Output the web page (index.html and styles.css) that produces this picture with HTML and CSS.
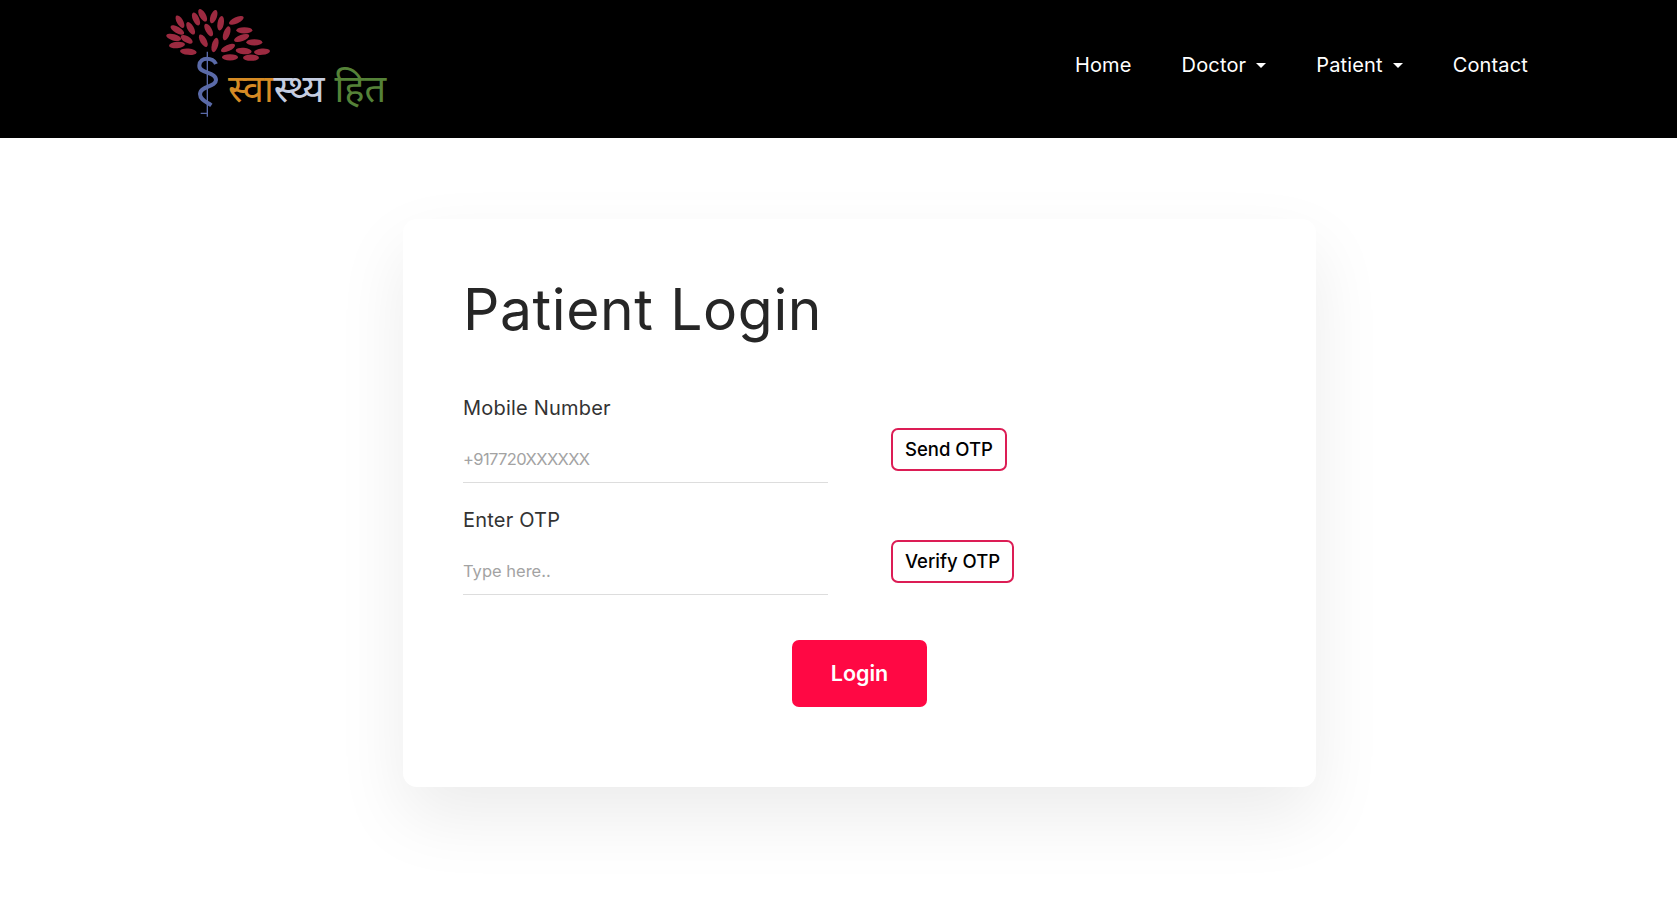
FILE: index.html
```html
<!DOCTYPE html>
<html lang="en">
<head>
    <meta charset="UTF-8">
    <meta name="viewport" content="width=device-width, initial-scale=1.0">
    <title>Patient Login</title>
    <link rel="stylesheet" href="styles.css">
</head>
<body>
    <header class="navbar">
        <a class="brand" href="#">
            <svg class="brand-logo" viewBox="0 0 780 390" width="260" height="130">
                <g fill="#9c2a40">
                    <ellipse cx="90" cy="65" rx="21" ry="9.5" transform="rotate(60 90 65)"/>
                    <ellipse cx="138" cy="57" rx="21" ry="9.5" transform="rotate(65 138 57)"/>
                    <ellipse cx="158" cy="46" rx="21" ry="9.5" transform="rotate(60 158 46)"/>
                    <ellipse cx="191" cy="50" rx="21" ry="9.5" transform="rotate(-70 191 50)"/>
                    <ellipse cx="259" cy="61" rx="24" ry="9.5" transform="rotate(-25 259 61)"/>
                    <ellipse cx="122" cy="85" rx="21" ry="9.5" transform="rotate(60 122 85)"/>
                    <ellipse cx="82" cy="90" rx="23" ry="9.5" transform="rotate(30 82 90)"/>
                    <ellipse cx="176" cy="90" rx="21" ry="9.5" transform="rotate(60 176 90)"/>
                    <ellipse cx="212" cy="70" rx="22" ry="9.5" transform="rotate(-80 212 70)"/>
                    <ellipse cx="283" cy="91" rx="24" ry="9.5"/>
                    <ellipse cx="230" cy="100" rx="22" ry="9.5" transform="rotate(-70 230 100)"/>
                    <ellipse cx="71" cy="112" rx="23" ry="9.5" transform="rotate(15 71 112)"/>
                    <ellipse cx="110" cy="118" rx="20" ry="9.5" transform="rotate(30 110 118)"/>
                    <ellipse cx="160" cy="122" rx="21" ry="9.5" transform="rotate(60 160 122)"/>
                    <ellipse cx="275" cy="114" rx="24" ry="9.5" transform="rotate(-20 275 114)"/>
                    <ellipse cx="313" cy="127" rx="24" ry="9.5"/>
                    <ellipse cx="81" cy="135" rx="24" ry="9.5" transform="rotate(-5 81 135)"/>
                    <ellipse cx="195" cy="135" rx="22" ry="9.5" transform="rotate(-75 195 135)"/>
                    <ellipse cx="234" cy="144" rx="23" ry="9.5" transform="rotate(-25 234 144)"/>
                    <ellipse cx="115" cy="155" rx="25" ry="9.5" transform="rotate(5 115 155)"/>
                    <ellipse cx="281" cy="153" rx="24" ry="9.5" transform="rotate(5 281 153)"/>
                    <ellipse cx="336" cy="155" rx="24" ry="9.5" transform="rotate(-5 336 155)"/>
                    <ellipse cx="240" cy="172" rx="24" ry="9.5"/>
                    <ellipse cx="303" cy="173" rx="24" ry="9.5"/>
                </g>
                <path d="M172 155V350M152 340H172" stroke="#5a6aa8" stroke-width="4" fill="none"/>
                <path d="M198 192C190 172 150 168 148 196C146 222 198 214 198 240C198 262 152 256 150 282C150 300 170 306 184 316" stroke="#5a6aa8" stroke-width="12" fill="none"/>
                <text class="brand-text" x="234" y="306"><tspan fill="#d68b24">स्वा</tspan><tspan fill="#c5cde0">स्थ्य</tspan> <tspan fill="#558238">हित</tspan></text>
            </svg>
        </a>
        <nav class="nav-links">
            <a href="#">Home</a>
            <a href="#" class="dropdown">Doctor</a>
            <a href="#" class="dropdown">Patient</a>
            <a href="#">Contact</a>
        </nav>
    </header>

    <main class="login-card">
        <h1>Patient Login</h1>
        <div class="form-row">
            <div class="field">
                <label for="mobile">Mobile Number</label>
                <input id="mobile" class="phone-input" type="text" placeholder="+917720XXXXXX">
            </div>
            <button class="otp-btn">Send OTP</button>
        </div>
        <div class="form-row">
            <div class="field">
                <label for="otp">Enter OTP</label>
                <input id="otp" type="text" placeholder="Type here..">
            </div>
            <button class="otp-btn">Verify OTP</button>
        </div>
        <div class="login-wrap">
            <button class="login-btn">Login</button>
        </div>
    </main>
</body>
</html>
```

FILE: styles.css
```css
* {
    box-sizing: border-box;
}

body {
    min-height: 908px;
    margin: 0;
    background-color: #fff;
    color: #2b2b2b;
    font-family: Inter, 'Open Sans', sans-serif;
}

.navbar {
    display: flex;
    justify-content: space-between;
    height: 138px;
    padding: 0 149px 0 150px;
    background-color: #000;
}

.brand {
    display: block;
    height: 130px;
}

.brand-logo {
    display: block;
}

.brand-text {
    font-family: 'Noto Sans', 'Noto Sans CJK SC', sans-serif;
    font-size: 114px;
}

.nav-links {
    display: flex;
    align-items: center;
    gap: 50px;
    height: 130px;
}

.nav-links a {
    color: #fff;
    font-size: 20px;
    letter-spacing: 0.15px;
    text-decoration: none;
}

.dropdown::after {
    content: "";
    display: inline-block;
    margin-left: 10px;
    vertical-align: 4px;
    border-top: 5px solid #fff;
    border-left: 5px solid transparent;
    border-right: 5px solid transparent;
}

.login-card {
    width: 913px;
    height: 568px;
    margin: 81px 0 0 403px;
    padding: 57px 60px 0;
    border-radius: 14px;
    background-color: #fff;
    box-shadow: 0 30px 70px rgba(0, 0, 0, 0.08);
}

h1 {
    margin: 0 0 27px;
    font-size: 57px;
    font-weight: 400;
    line-height: 68px;
    letter-spacing: 0.6px;
    color: #262626;
}

.form-row {
    display: flex;
    align-items: flex-end;
    gap: 63px;
    height: 112px;
}

.field {
    display: flex;
    flex-direction: column;
    width: 365px;
}

.field label {
    margin-bottom: 17px;
    font-size: 20px;
    line-height: 28px;
    letter-spacing: 0.2px;
    color: #333;
}

.field input {
    height: 44px;
    padding: 0 0 3px;
    border: none;
    border-bottom: 1px solid #ddd;
    outline: none;
    font-family: inherit;
    font-size: 16.5px;
}

.field .phone-input {
    letter-spacing: -0.6px;
}

.field input::placeholder {
    color: #a3a3a3;
}

.otp-btn {
    height: 43px;
    margin-bottom: 12px;
    padding: 0 12px 2px;
    border: 2px solid #dc1d55;
    border-radius: 7px;
    background-color: #fff;
    color: #000;
    font-family: inherit;
    font-size: 18.5px;
    font-weight: 500;
}

.login-wrap {
    display: flex;
    justify-content: center;
    margin-top: 45px;
}

.login-btn {
    width: 135px;
    height: 67px;
    padding-bottom: 2px;
    border: none;
    border-radius: 7px;
    background-color: #ff0844;
    color: #fff;
    font-family: inherit;
    font-size: 21.5px;
    font-weight: 600;
}
```
